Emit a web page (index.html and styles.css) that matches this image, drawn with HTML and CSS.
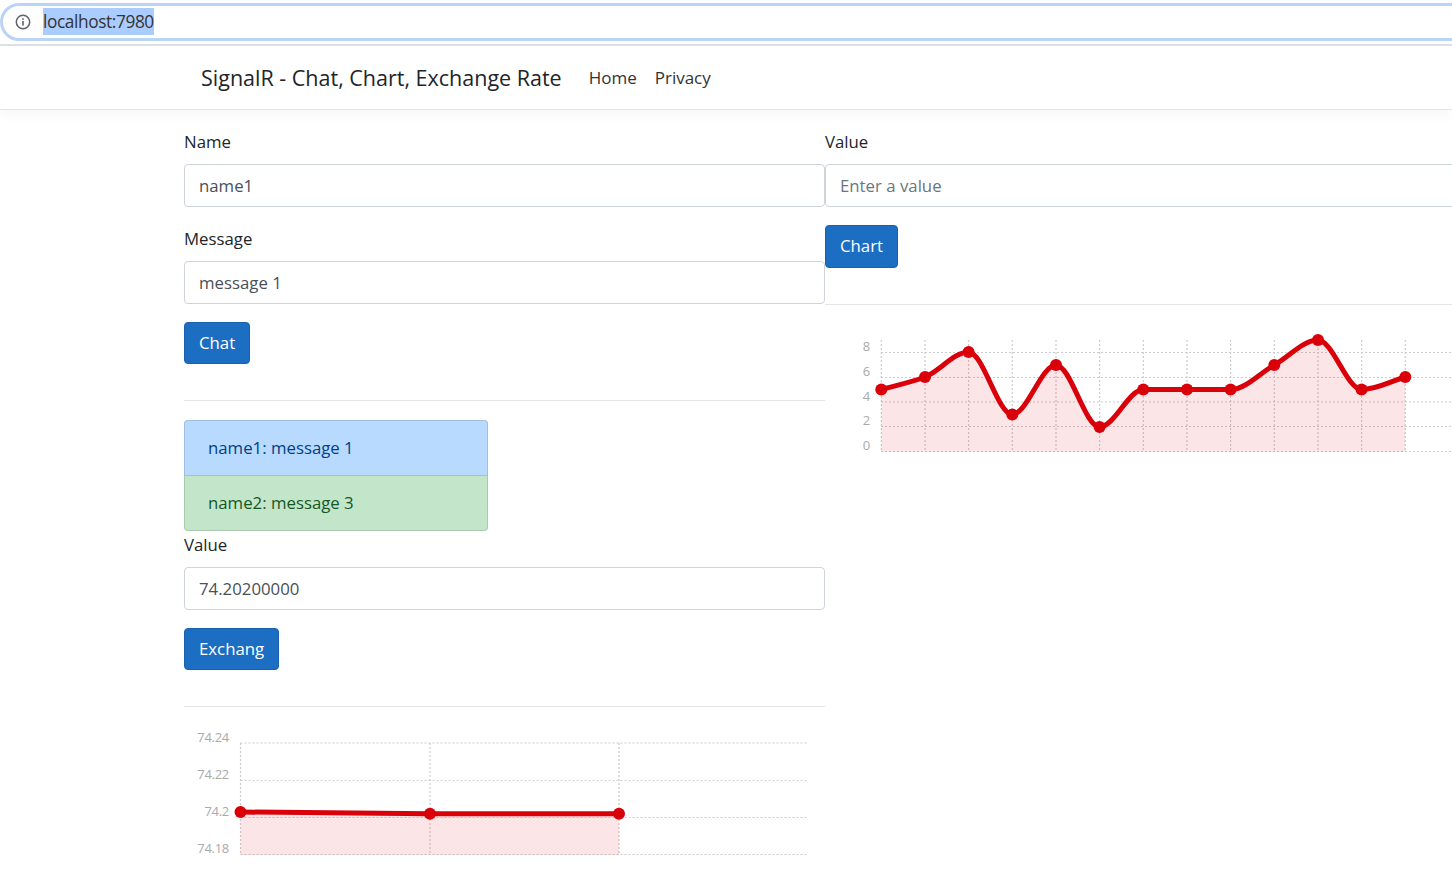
FILE: index.html
```html
<!DOCTYPE html>
<html lang="en">
<head>
<meta charset="utf-8">
<title>SignalR - Chat, Chart, Exchange Rate</title>
<link rel="stylesheet" href="styles.css">
</head>
<body>
<div class="browser-bar">
  <div class="address">
    <svg class="info" width="16" height="16" viewBox="0 0 16 16"><circle cx="8" cy="8" r="6.7" fill="none" stroke="#5f6368" stroke-width="1.5"/><rect x="7.2" y="7" width="1.6" height="4.6" fill="#5f6368"/><rect x="7.2" y="4.3" width="1.6" height="1.6" fill="#5f6368"/></svg>
    <span class="url">localhost:7980</span>
  </div>
</div>
<nav class="navbar">
  <span class="brand">SignalR - Chat, Chart, Exchange Rate</span>
  <a class="nav-link">Home</a>
  <a class="nav-link">Privacy</a>
</nav>
<main class="content">
  <section class="col">
    <label class="label">Name</label>
    <input class="input" value="name1">
    <label class="label">Message</label>
    <input class="input" value="message 1">
    <button class="btn">Chat</button>
    <hr class="rule">
    <ul class="messages">
      <li class="msg msg-blue">name1: message 1</li>
      <li class="msg msg-green">name2: message 3</li>
    </ul>
    <label class="label label-tight">Value</label>
    <input class="input" value="74.20200000">
    <button class="btn">Exchang</button>
    <hr class="rule">
    <svg class="chart" width="641" height="160" viewBox="184 707 641 160">
      <g class="grid">
        <path d="M240.5 743H808M240.5 780.5H808M240.5 817.5H808M240.5 854.5H808"/>
        <path d="M240.5 743V855M430 743V855M619 743V855"/>
      </g>
      <path class="area" d="M240.5 812L430 813.7H619V855H240.5Z"/>
      <path class="line" d="M240.5 812L430 813.7H619"/>
      <g class="dots"><circle cx="240.5" cy="812" r="6"/><circle cx="430" cy="813.7" r="6"/><circle cx="619" cy="813.7" r="6"/></g>
      <g class="ticks">
        <text x="229" y="742">74.24</text><text x="229" y="779">74.22</text><text x="229" y="816">74.2</text><text x="229" y="853">74.18</text>
      </g>
    </svg>
  </section>
  <section class="col">
    <label class="label">Value</label>
    <input class="input" placeholder="Enter a value">
    <button class="btn">Chart</button>
    <hr class="rule">
    <svg class="chart" width="641" height="160" viewBox="825 305 641 160">
      <g class="grid">
        <path d="M881 352.5H1452M881 377.5H1452M881 402H1452M881 426.5H1452M881 451.5H1452"/>
        <path d="M881.3 340V452M925 340V452M968.6 340V452M1012.3 340V452M1056 340V452M1099.6 340V452M1143.3 340V452M1187 340V452M1230.6 340V452M1274.3 340V452M1318 340V452M1361.6 340V452M1405.3 340V452"/>
      </g>
      <path class="area" d="M881.3 389.5C895.9 385.3 910.4 382.6 925 377C939.3 371.4 954 352 968.6 352C983.2 352 997.7 414.5 1012.3 414.5C1026.9 414.5 1041.4 365 1056 365C1070.6 365 1085 427 1099.6 427C1114.2 427 1128.7 389.5 1143.3 389.5L1230.6 389.5C1245.2 389.5 1259.7 373.25 1274.3 365C1288.9 356.75 1303.4 340 1318 340C1332.6 340 1347 389.5 1361.6 389.5C1376.2 389.5 1390.7 381.2 1405.3 377V452H881.3Z"/>
      <path class="line" d="M881.3 389.5C895.9 385.3 910.4 382.6 925 377C939.3 371.4 954 352 968.6 352C983.2 352 997.7 414.5 1012.3 414.5C1026.9 414.5 1041.4 365 1056 365C1070.6 365 1085 427 1099.6 427C1114.2 427 1128.7 389.5 1143.3 389.5L1230.6 389.5C1245.2 389.5 1259.7 373.25 1274.3 365C1288.9 356.75 1303.4 340 1318 340C1332.6 340 1347 389.5 1361.6 389.5C1376.2 389.5 1390.7 381.2 1405.3 377"/>
      <g class="dots">
        <circle cx="881.3" cy="389.5" r="6"/><circle cx="925" cy="377" r="6"/><circle cx="968.6" cy="352" r="6"/><circle cx="1012.3" cy="414.5" r="6"/><circle cx="1056" cy="365" r="6"/><circle cx="1099.6" cy="427" r="6"/><circle cx="1143.3" cy="389.5" r="6"/><circle cx="1187" cy="389.5" r="6"/><circle cx="1230.6" cy="389.5" r="6"/><circle cx="1274.3" cy="365" r="6"/><circle cx="1318" cy="340" r="6"/><circle cx="1361.6" cy="389.5" r="6"/><circle cx="1405.3" cy="377" r="6"/>
      </g>
      <g class="ticks">
        <text x="870" y="351">8</text><text x="870" y="376">6</text><text x="870" y="401">4</text><text x="870" y="425">2</text><text x="870" y="450">0</text>
      </g>
    </svg>
  </section>
</main>
</body>
</html>
```
FILE: styles.css
```css
* { box-sizing: border-box; }
html, body { margin: 0; height: 880px; overflow: hidden; background: #fff; }
body { font-family: "Open Sans", "Noto Sans", sans-serif; font-size: 16.8px; color: #212529; }

.browser-bar { height: 46px; padding-top: 3px; border-bottom: 2px solid #dee1e6; }
.address { display: flex; align-items: center; height: 38px; margin-right: -30px; padding-left: 12px; padding-bottom: 1px; border: 3px solid #b9d4f7; border-radius: 19px; }
.info { flex: none; margin-right: 12px; }
.url { font-size: 17.3px; line-height: 27px; letter-spacing: -0.4px; color: #333; background: #aaccff; }

.navbar { display: flex; align-items: center; height: 64px; padding-left: 201px; border-bottom: 1px solid #e4e4e4; box-shadow: 0 4px 12px rgba(0,0,0,.04); }
.brand { font-size: 21.5px; margin-right: 27px; color: #212529; }
.nav-link { font-size: 17px; margin-right: 18px; color: #333; }

.content { display: grid; grid-template-columns: 641px 641px; padding: 18.2px 0 0 184px; }
.col { display: flex; flex-direction: column; align-items: flex-start; min-width: 0; }
.label { display: block; height: 27px; line-height: 27px; margin-bottom: 9px; }
.input { display: block; width: 100%; height: 42.75px; margin-bottom: 18px; padding: 0.4px 14px 0; font: inherit; color: #495057; background: #fff; border: 1px solid #ced4da; border-radius: 4px; }
.input::placeholder { color: #6c757d; opacity: 1; }
.btn { display: block; height: 42.75px; padding: 0 14px 1px; font: inherit; color: #fff; background: #1b6ec2; border: 1px solid #1861ac; border-radius: 4px; }
.rule { align-self: stretch; height: 1px; margin: 36px 0 18.125px; border: 0; background: #e6e6e6; }

.messages { width: 304px; margin: 0; padding: 0; list-style: none; }
.msg { line-height: 54px; padding-left: 23px; border: 1px solid rgba(0,0,0,.125); }
.msg-blue { height: 56px; color: #004085; background: #b8daff; border-radius: 4px 4px 0 0; }
.msg-green { height: 55.2px; color: #155724; background: #c3e6cb; border-top: 0; border-radius: 0 0 4px 4px; }

.chart { display: block; flex: none; overflow: hidden; margin-top: -18px; }
.grid path { fill: none; stroke: #cccccc; stroke-width: 1.2; stroke-dasharray: 2 2; }
.area { fill: rgba(220,0,20,.1); }
.line { fill: none; stroke: #d90009; stroke-width: 5; }
.dots circle { fill: #d90009; }
.ticks text { font-size: 13px; text-anchor: end; fill: #aaa; letter-spacing: -0.3px; }
```
